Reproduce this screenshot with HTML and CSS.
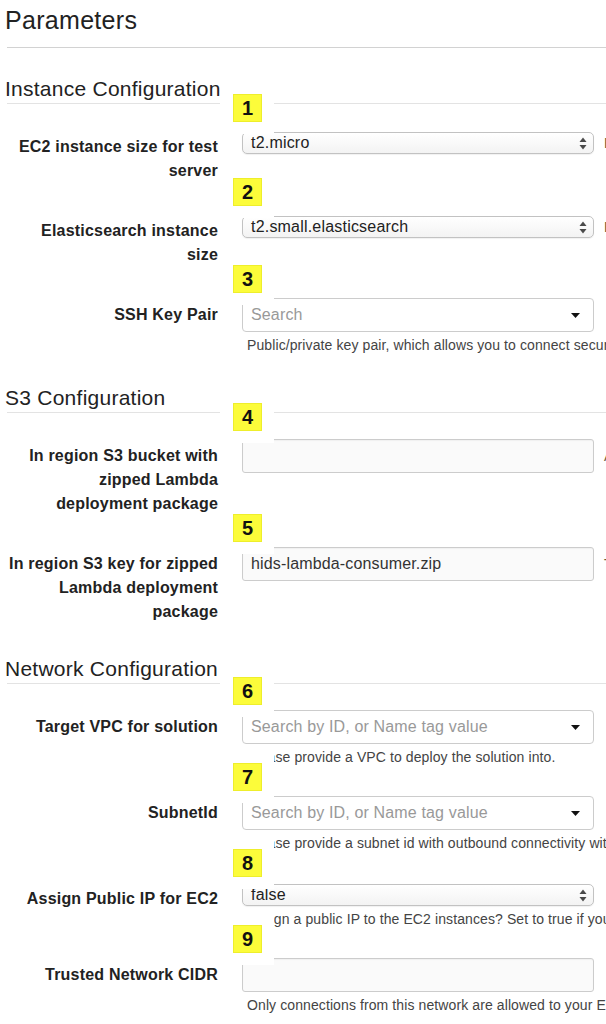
FILE: index.html
```html
<!DOCTYPE html>
<html lang="en">
<head>
<meta charset="utf-8">
<title>Parameters</title>
<link rel="stylesheet" href="styles.css">
</head>
<body>
<div class="page">
  <h1 class="title">Parameters</h1>

  <section class="group">
    <h2 class="group-title">Instance Configuration</h2>

    <div class="row native-row">
      <div class="label">EC2 instance size for test<br>server</div>
      <div class="control">
        <div class="tag up"><span class="num">1</span></div>
        <div class="native">
          <span>t2.micro</span>
          <svg class="updown" width="8" height="13" viewBox="0 0 8 13"><path d="M4 0.5 L7.5 5 H0.5 Z"/><path d="M4 12.5 L7.5 8 H0.5 Z"/></svg>
        </div>
      </div>
      <div class="desc">EC2 instance type for the test server</div>
    </div>

    <div class="row native-row">
      <div class="label">Elasticsearch instance<br>size</div>
      <div class="control">
        <div class="tag up"><span class="num">2</span></div>
        <div class="native">
          <span>t2.small.elasticsearch</span>
          <svg class="updown" width="8" height="13" viewBox="0 0 8 13"><path d="M4 0.5 L7.5 5 H0.5 Z"/><path d="M4 12.5 L7.5 8 H0.5 Z"/></svg>
        </div>
      </div>
      <div class="desc">Elasticsearch instance type for the domain</div>
    </div>

    <div class="row">
      <div class="label">SSH Key Pair</div>
      <div class="control">
        <div class="tag"><span class="num">3</span></div>
        <div class="dropdown">
          <span class="placeholder">Search</span>
          <svg class="caret" width="9" height="5" viewBox="0 0 9 5"><path d="M0 0 H9 L4.5 5 Z"/></svg>
        </div>
        <div class="help">Public/private key pair, which allows you to connect securely to your instance after it launches</div>
      </div>
    </div>
  </section>

  <section class="group">
    <h2 class="group-title">S3 Configuration</h2>

    <div class="row">
      <div class="label">In region S3 bucket with<br>zipped Lambda<br>deployment package</div>
      <div class="control">
        <div class="tag up"><span class="num">4</span></div>
        <div class="input"></div>
      </div>
      <div class="desc">An existing S3 bucket in this region</div>
    </div>

    <div class="row">
      <div class="label">In region S3 key for zipped<br>Lambda deployment<br>package</div>
      <div class="control">
        <div class="tag"><span class="num">5</span></div>
        <div class="input">hids-lambda-consumer.zip</div>
      </div>
      <div class="desc">The key of the zipped Lambda package</div>
    </div>
  </section>

  <section class="group">
    <h2 class="group-title">Network Configuration</h2>

    <div class="row">
      <div class="label">Target VPC for solution</div>
      <div class="control">
        <div class="tag"><span class="num">6</span></div>
        <div class="dropdown">
          <span class="placeholder">Search by ID, or Name tag value</span>
          <svg class="caret" width="9" height="5" viewBox="0 0 9 5"><path d="M0 0 H9 L4.5 5 Z"/></svg>
        </div>
        <div class="help">Please provide a VPC to deploy the solution into.</div>
      </div>
    </div>

    <div class="row">
      <div class="label">SubnetId</div>
      <div class="control">
        <div class="tag"><span class="num">7</span></div>
        <div class="dropdown">
          <span class="placeholder">Search by ID, or Name tag value</span>
          <svg class="caret" width="9" height="5" viewBox="0 0 9 5"><path d="M0 0 H9 L4.5 5 Z"/></svg>
        </div>
        <div class="help">Please provide a subnet id with outbound connectivity within the VPC you selected above.</div>
      </div>
    </div>

    <div class="row native-row">
      <div class="label">Assign Public IP for EC2</div>
      <div class="control">
        <div class="tag"><span class="num">8</span></div>
        <div class="native">
          <span>false</span>
          <svg class="updown" width="8" height="13" viewBox="0 0 8 13"><path d="M4 0.5 L7.5 5 H0.5 Z"/><path d="M4 12.5 L7.5 8 H0.5 Z"/></svg>
        </div>
        <div class="help">Assign a public IP to the EC2 instances? Set to true if you want to reach them directly.</div>
      </div>
    </div>

    <div class="row">
      <div class="label">Trusted Network CIDR</div>
      <div class="control">
        <div class="tag"><span class="num">9</span></div>
        <div class="input"></div>
        <div class="help">Only connections from this network are allowed to your EC2 instances.</div>
      </div>
    </div>
  </section>
</div>
</body>
</html>
```

FILE: styles.css
```css
* {
  box-sizing: border-box;
}

html,
body {
  margin: 0;
  background: #ffffff;
  overflow-x: hidden;
}

body {
  font-family: "Liberation Sans", Arial, Helvetica, sans-serif;
  color: #222222;
}

.page {
  width: 606px;
  overflow: hidden;
  padding: 5px 0 40px 7px;
}

.title {
  margin: 0;
  font-size: 25px;
  font-weight: normal;
  line-height: 30px;
  letter-spacing: 0.3px;
  padding-bottom: 12px;
  border-bottom: 1px solid #d2d2d2;
  text-indent: -2px;
  color: #222222;
}

.group {
  margin-top: 29px;
}

.group + .group {
  margin-top: 33px;
}

.group-title {
  margin: 0 0 26px;
  font-size: 21px;
  font-weight: normal;
  line-height: 24px;
  letter-spacing: 0.25px;
  padding-bottom: 2px;
  border-bottom: 1px solid #e3e3e3;
  text-indent: -2px;
  color: #222222;
}

.row {
  display: grid;
  grid-template-columns: 211px 376px max-content;
  align-items: start;
}

.row + .row {
  margin-top: 31px;
}

.label {
  text-align: right;
  font-weight: bold;
  font-size: 16px;
  line-height: 24px;
  letter-spacing: 0.2px;
  padding-top: 5px;
  white-space: nowrap;
  color: #222222;
}

.control {
  margin-left: 24px;
  position: relative;
}

.desc {
  margin-left: 10px;
  padding-top: 9px;
  font-size: 14px;
  line-height: 16px;
  color: #6b5a3c;
  white-space: nowrap;
}

.native-row .desc {
  padding-top: 5px;
}

.native {
  margin-top: 2px;
  height: 22px;
  border: 1px solid #c2c2c2;
  border-radius: 5px;
  background: linear-gradient(#ffffff, #f3f3f3);
  box-shadow: 0 1px 1px rgba(0, 0, 0, 0.06);
  display: flex;
  align-items: center;
  justify-content: space-between;
  padding: 0 6px 0 8px;
  font-size: 16px;
  letter-spacing: 0.2px;
  color: #222222;
}

.updown {
  fill: #4a4a4a;
  display: block;
}

.dropdown {
  height: 34px;
  border: 1px solid #cccccc;
  border-radius: 4px;
  background: #ffffff;
  display: flex;
  align-items: center;
  justify-content: space-between;
  padding: 0 13px 0 8px;
  font-size: 16px;
  letter-spacing: 0.15px;
}

.placeholder {
  color: #999999;
}

.caret {
  fill: #111111;
  display: block;
}

.input {
  height: 34px;
  border: 1px solid #cccccc;
  border-radius: 3px;
  background: #fafafa;
  box-shadow: inset 0 1px 1px rgba(0, 0, 0, 0.04);
  display: flex;
  align-items: center;
  padding: 0 8px;
  font-size: 16px;
  letter-spacing: 0.15px;
  color: #333333;
}

.help {
  margin-top: 5px;
  padding-left: 5px;
  font-size: 14px;
  line-height: 16px;
  letter-spacing: 0.1px;
  color: #444444;
  white-space: nowrap;
}

.tag {
  position: absolute;
  left: -22px;
  top: -49px;
  padding: 16px 12px 12px 13px;
  background: #ffffff;
  z-index: 2;
}

.tag.up {
  top: -52px;
}

.num {
  display: block;
  width: 29px;
  height: 28px;
  background: #fcfc3a;
  box-shadow: inset 0 0 0 1px #eeee2c;
  font-weight: bold;
  font-size: 20px;
  line-height: 28px;
  text-align: center;
  color: #111111;
}
```
